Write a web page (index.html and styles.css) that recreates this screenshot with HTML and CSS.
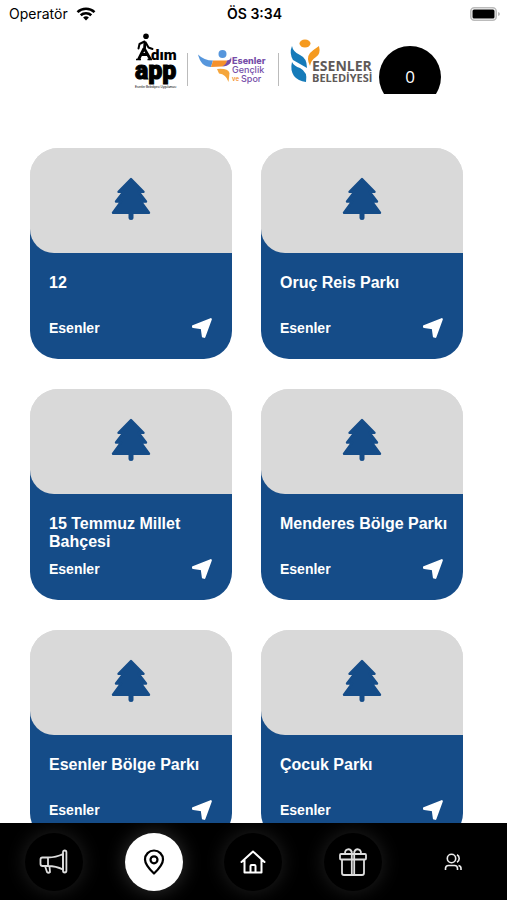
FILE: index.html
```html
<!DOCTYPE html>
<html lang="tr">
<head>
<meta charset="utf-8">
<meta name="viewport" content="width=device-width, initial-scale=1">
<title>Adım App</title>
<link rel="stylesheet" href="styles.css">
</head>
<body>
<svg class="defs" aria-hidden="true">
  <symbol id="tree" viewBox="0 0 40 44">
    <path d="M20 2 32.500 14.800H27.500L35 24.600H30L38 35.800H2L10 24.600H5L12.500 14.800H7.500Z" fill="currentColor" stroke="currentColor" stroke-width="2.400" stroke-linejoin="round"/>
    <path d="M20 36v4.500" stroke="currentColor" stroke-width="5" stroke-linecap="round"/>
  </symbol>
  <symbol id="arrow" viewBox="0 0 22 22">
    <path d="M19.800 2.200 2 9.200 2.300 10 10.800 11.200 12 19.500 13.300 19.800Z" fill="currentColor" stroke="currentColor" stroke-width="2.200" stroke-linejoin="round"/>
  </symbol>
</svg>

<div class="status">
  <div class="carrier">Operatör
    <svg width="20" height="14" viewBox="0 0 20 14" fill="none" stroke="#000" stroke-width="2.600"><path d="M1.500 5.100a12.300 12.300 0 0 1 17 0M4.700 8.300a7.700 7.700 0 0 1 10.600 0"/><path d="M10 13.500 7.100 10.600a4.200 4.200 0 0 1 5.800 0Z" fill="#000" stroke="none"/></svg>
  </div>
  <div class="clock">ÖS 3:34</div>
  <svg class="battery" width="30" height="14" viewBox="0 0 30 14"><rect x=".8" y=".8" width="25.400" height="12.400" rx="3.500" fill="#fff" stroke="#bbb" stroke-width="1.600"/><rect x="2.500" y="2.500" width="22" height="9" rx="1.500"/><path d="M28 5v4q2-.6 2-2t-2-2Z" fill="#bbb"/></svg>
</div>

<header class="header">
  <svg class="logo" width="44" height="58" viewBox="0 0 44 58" role="img" aria-label="Adım App">
    <circle cx="12" cy="3.200" r="2.800"/>
    <path d="M10.500 8.500 5.500 11 4.500 15.500M12 10l2.500 4.500 4 1.500" fill="none" stroke="#000" stroke-width="2" stroke-linecap="round" stroke-linejoin="round"/>
    <path d="M11 8.500 10.500 16 16.500 26.500M10 15.500 4.500 26.500M7 21.500H14" fill="none" stroke="#000" stroke-width="2.800"/>
    <path d="M2 26.500H7M13.500 26.500H18" stroke="#000" stroke-width="1.600"/>
    <text class="adim" x="17" y="27">dım</text>
    <text class="app" x="1" y="46">app</text>
    <text class="tagline" x="1" y="55">Esenler Belediyesi Uygulaması</text>
  </svg>
  <span class="rule"></span>
  <svg class="logo" width="72" height="38" viewBox="0 0 72 38" role="img" aria-label="Esenler Gençlik ve Spor">
    <circle cx="25.500" cy="8" r="4" fill="#5696dc"/>
    <path d="M1 8.500Q7 14.500 16 14.500L14 21Q4 21 1 8.500Z" fill="#5696dc"/>
    <path d="M16 14.500H30Q30 19 25 20.500L14 21Z" fill="#f5912c"/>
    <path d="M30 14.500Q34 14 34 10.500 36 20 25 20.500 29 19 30 14.500Z" fill="#754da8"/>
    <path d="M20 23Q31 22 32.500 27L31.500 36Q29 28 22 27.500Z" fill="#f5a63c"/>
    <text class="club club-bold" x="35" y="18">Esenler</text>
    <text class="club" x="35" y="27">Gençlik</text>
    <text class="ve" x="35" y="35">ve</text>
    <text class="club" x="44" y="36">Spor</text>
  </svg>
  <span class="rule"></span>
  <svg class="logo" width="84" height="48" viewBox="0 0 84 48" role="img" aria-label="Esenler Belediyesi">
    <ellipse cx="17" cy="5.500" rx="5.500" ry="4" fill="#f59a1f"/>
    <path d="M31 8Q33 16 28 19 23 22 22 28 18 20 22 15 25 12 31 8Z" fill="#f59a1f"/>
    <path d="M4 8Q5 14 12 17 19 20 19 30L5 22Q1 15 4 8Z" fill="#167bb9"/>
    <path d="M4 24Q6 28 12 30 20 34 18 44 10 43 6 38 2 32 4 24Z" fill="#167bb9"/>
    <text class="city" x="24" y="33">ESENLER</text>
    <text class="town" x="24" y="44">BELEDİYESİ</text>
  </svg>
  <div class="score">0</div>
</header>

<main class="list">
  <a class="card" href="#"><span class="cover"><svg width="40" height="44"><use href="#tree"/></svg></span><span class="info"><span class="name">12</span><span class="place">Esenler<svg width="22" height="22"><use href="#arrow"/></svg></span></span></a>
  <a class="card" href="#"><span class="cover"><svg width="40" height="44"><use href="#tree"/></svg></span><span class="info"><span class="name">Oruç Reis Parkı</span><span class="place">Esenler<svg width="22" height="22"><use href="#arrow"/></svg></span></span></a>
  <a class="card" href="#"><span class="cover"><svg width="40" height="44"><use href="#tree"/></svg></span><span class="info"><span class="name">15 Temmuz Millet Bahçesi</span><span class="place">Esenler<svg width="22" height="22"><use href="#arrow"/></svg></span></span></a>
  <a class="card" href="#"><span class="cover"><svg width="40" height="44"><use href="#tree"/></svg></span><span class="info"><span class="name">Menderes Bölge Parkı</span><span class="place">Esenler<svg width="22" height="22"><use href="#arrow"/></svg></span></span></a>
  <a class="card" href="#"><span class="cover"><svg width="40" height="44"><use href="#tree"/></svg></span><span class="info"><span class="name">Esenler Bölge Parkı</span><span class="place">Esenler<svg width="22" height="22"><use href="#arrow"/></svg></span></span></a>
  <a class="card" href="#"><span class="cover"><svg width="40" height="44"><use href="#tree"/></svg></span><span class="info"><span class="name">Çocuk Parkı</span><span class="place">Esenler<svg width="22" height="22"><use href="#arrow"/></svg></span></span></a>
</main>

<nav class="tabs">
  <a class="tab" href="#" aria-label="Duyurular"><svg width="30" height="28" viewBox="0 0 30 28" fill="none" stroke="#ddd" stroke-width="1.800" stroke-linejoin="round"><path d="M3.500 9.500H9V18H3.500Q1.500 18 1.500 16V11.500Q1.500 9.500 3.500 9.500ZM9 9.500Q17 9.500 24 6V21.500Q17 18 9 18"/><rect x="24" y="2.500" width="3.400" height="22" rx="1.700"/><path d="M6 18 8 24Q9.500 25.500 11 24L10.500 18.500"/></svg></a>
  <a class="tab active" href="#" aria-label="Parklar" aria-current="page"><svg width="22" height="26" viewBox="0 0 22 26" fill="none" stroke="#000" stroke-width="2.200" stroke-linejoin="round"><path d="M11 24.500Q2 16 2 10.500A9 9 0 0 1 20 10.500Q20 16 11 24.500Z"/><circle cx="11" cy="10.800" r="3.500"/></svg></a>
  <a class="tab" href="#" aria-label="Ana sayfa"><svg width="26" height="24" viewBox="0 0 26 24" fill="none" stroke="#fff" stroke-width="2" stroke-linejoin="round" stroke-linecap="round"><path d="M1.500 12 13 1.500 24.500 12M4.500 10V22.500H21.500V10M10.500 22V16Q10.500 15 11.500 15H14.500Q15.500 15 15.500 16V22"/></svg></a>
  <a class="tab" href="#" aria-label="Hediyeler"><svg width="28" height="28" viewBox="0 0 28 28" fill="none" stroke="#ddd" stroke-width="1.800" stroke-linejoin="round"><rect x="1" y="6" width="26" height="5.500" rx="1"/><path d="M3 11.500V25Q3 27 5 27H23Q25 27 25 25V11.500M12.800 6V27M15.200 6V27M12.500 6H6.500C4.500 2 10.500-1 12.800 4ZM15.500 6H21.500C23.500 2 17.500-1 15.200 4Z"/></svg></a>
  <a class="tab plain" href="#" aria-label="Profil"><svg width="18" height="18" viewBox="0 0 18 18" fill="none" stroke="#eee" stroke-width="1.600"><circle cx="7.500" cy="5.500" r="4.200"/><path d="M1.500 17V15.500Q1.500 12.500 4.500 12.500H10.500Q13.500 12.500 13.500 15.500V17M13 1.800Q15.200 3 15.200 5.500T13 9.200M14.500 12.500Q17 13 17 15.500V17"/></svg></a>
</nav>
</body>
</html>
```
FILE: styles.css
```css
* {
  box-sizing: border-box;
}

body {
  margin: 0;
  height: 100vh;
  display: flex;
  flex-direction: column;
  overflow: hidden;
  background: #fff;
  color: #000;
  font-family: "Liberation Sans", Arial, sans-serif;
}

svg {
  display: block;
  flex: none;
}

a {
  color: inherit;
  text-decoration: none;
}

.defs {
  position: absolute;
  width: 0;
  height: 0;
}

.status {
  display: grid;
  grid-template-columns: 1fr auto 1fr;
  align-items: center;
  height: 28px;
  flex: none;
  padding: 0 7px 0 9px;
  font: 14px/20px Inter, sans-serif;
}

.carrier {
  display: flex;
  align-items: center;
  gap: 8px;
}

.clock {
  font-weight: 600;
}

.battery {
  justify-self: end;
}

.header {
  display: flex;
  align-items: flex-start;
  flex: none;
  height: 66px;
  padding-left: 134px;
  overflow: hidden;
}

.logo {
  margin-top: 5px;
  overflow: visible;
}

.logo + .rule + .logo {
  margin-top: 18px;
}

.logo + .rule + .logo + .rule + .logo {
  margin-top: 10px;
}

.rule {
  width: 1px;
  height: 33px;
  margin: 25px 9px 0;
  background: #bbb;
}

.adim {
  font: 900 15px Roboto, sans-serif;
}

.app {
  font: 900 25px Roboto, sans-serif;
  stroke: #000;
}

.tagline {
  font: 3px "Liberation Sans", sans-serif;
}

.club {
  font: 500 9px Inter, sans-serif;
  fill: #754da8;
}

.club-bold {
  font-weight: 800;
}

.ve {
  font: 600 6px Inter, sans-serif;
  fill: #f5912c;
}

.city {
  font: bold 14px "Open Sans", sans-serif;
  fill: #605a58;
}

.town {
  font: bold 11px "Open Sans", sans-serif;
  fill: #605a58;
}

.score {
  flex: none;
  width: 62px;
  height: 62px;
  margin: 18px 0 0 7px;
  border-radius: 50%;
  background: #000;
  color: #fff;
  font: 17px/62px "Open Sans", sans-serif;
  text-align: center;
}

.list {
  flex: 1;
  min-height: 0;
  display: grid;
  grid-template-columns: 1fr 1fr;
  grid-auto-rows: max-content;
  gap: 30px 29px;
  padding: 54px 44px 0 30px;
  overflow: hidden;
}

.card {
  display: flex;
  flex-direction: column;
  border-radius: 28px;
  overflow: hidden;
  background: linear-gradient(#d9d9d9 60px, #154c88 60px);
  color: #fff;
  font-weight: bold;
}

.cover {
  display: flex;
  align-items: center;
  justify-content: center;
  height: 105px;
  padding-bottom: 4px;
  border-bottom-left-radius: 24px;
  background: #d9d9d9;
  color: #154c88;
}

.info {
  display: flex;
  flex-direction: column;
  gap: 8px;
  padding: 21px 13px 21px 19px;
}

.name {
  min-height: 36px;
  font-size: 16px;
  line-height: 18px;
}

.place {
  display: flex;
  align-items: center;
  justify-content: space-between;
  height: 20px;
  padding-right: 6px;
  font-size: 14px;
}

.tabs {
  display: grid;
  grid-template-columns: repeat(5, 1fr);
  justify-items: center;
  align-items: center;
  flex: none;
  height: 77px;
  padding: 0 4px;
  overflow: hidden;
  background: #000;
}

.tab {
  display: flex;
  align-items: center;
  justify-content: center;
  width: 58px;
  height: 58px;
  border-radius: 50%;
  background: #000;
  box-shadow: 0 0 20px rgba(255, 255, 255, 0.13);
}

.active {
  background: #fff;
  box-shadow: 0 0 20px rgba(255, 255, 255, 0.2);
}

.plain {
  box-shadow: none;
}
```
